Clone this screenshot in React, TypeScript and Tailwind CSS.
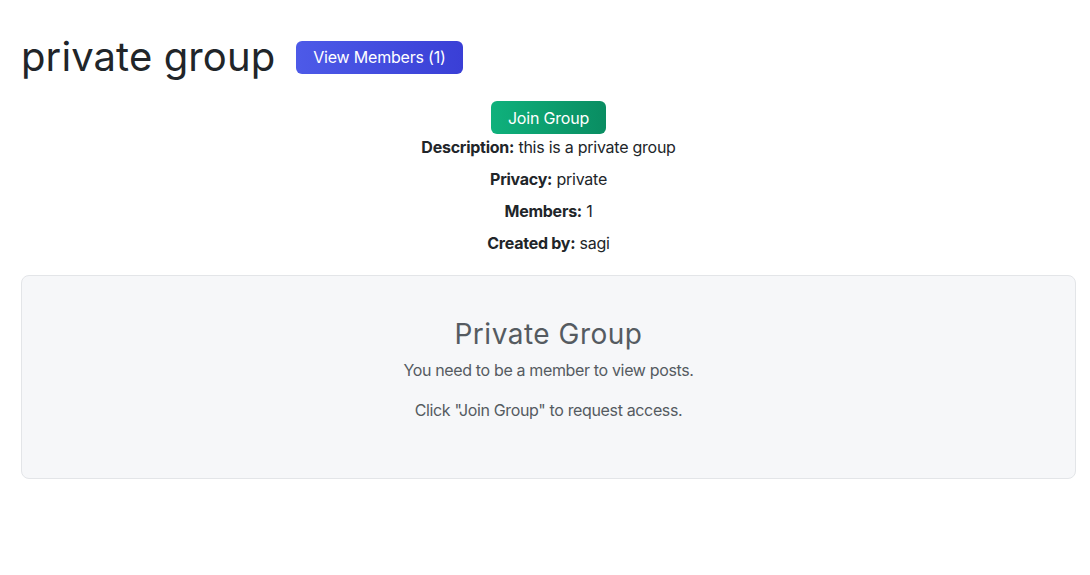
import React from 'react';

export default function App() {
  const details = [
    { label: 'Description:', value: 'this is a private group' },
    { label: 'Privacy:', value: 'private' },
    { label: 'Members:', value: '1' },
    { label: 'Created by:', value: 'sagi' },
  ];

  return (
    <div className="min-h-screen bg-white pl-[21px] pr-[14px] pt-[31px] font-['Inter',sans-serif] text-[#212529]">
      {/* Header */}
      <div className="flex items-center gap-[21px]">
        <h1 className="text-[40px] leading-[52px] font-normal tracking-[0.1px]">private group</h1>
        <button className="h-[33px] px-[17px] rounded-[6px] bg-gradient-to-r from-[#4d5ae8] to-[#3a3fd6] text-white text-[16px] leading-none tracking-[-0.2px]">
          View Members (1)
        </button>
      </div>

      {/* Group info */}
      <div className="flex flex-col items-center mt-[18px]">
        <button className="h-[33px] px-[17px] rounded-[6px] bg-gradient-to-r from-[#0fb17c] to-[#0a8d62] text-white text-[16px] leading-none tracking-[-0.2px]">
          Join Group
        </button>
        <div className="flex flex-col items-center gap-[8px] mt-[1px]">
          {details.map((d) => (
            <p key={d.label} className="text-[16px] leading-[24px] tracking-[-0.25px]">
              <span className="font-bold">{d.label}</span> {d.value}
            </p>
          ))}
        </div>
      </div>

      {/* Locked posts card */}
      <div className="mt-[20px] h-[204px] rounded-[8px] border border-[#e3e5e8] bg-[#f6f7f9] flex flex-col items-center pt-[41px] text-[#555b61]">
        <h2 className="text-[28px] leading-[34px] font-normal tracking-[0.5px]">Private Group</h2>
        <p className="mt-[7px] text-[16px] leading-[24px] tracking-[-0.35px]">You need to be a member to view posts.</p>
        <p className="mt-[16px] text-[16px] leading-[24px] tracking-[-0.35px]">Click "Join Group" to request access.</p>
      </div>
    </div>
  );
}
